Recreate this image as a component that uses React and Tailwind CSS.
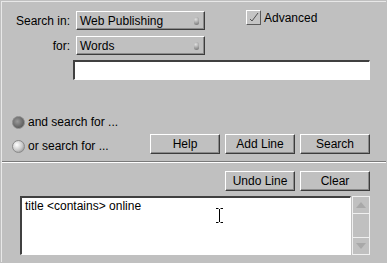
import React from "react";

/* classic motif-ish widgets */
const raised =
  "border border-t-white border-l-white border-r-[#3c3c3c] border-b-[#3c3c3c] shadow-[inset_-1px_-1px_0_#8a8a8a] bg-[#c0c0c0]";
const sunken =
  "border-t-2 border-l-2 border-r border-b border-t-[#404040] border-l-[#404040] border-r-white border-b-white bg-white";

function Dropdown({ value }) {
  return (
    <div className={`${raised} w-[129px] h-[19px] flex items-center pl-[3px] pr-[5px]`}>
      <span className="flex-1 text-[12px] leading-none text-black">{value}</span>
      <span className="w-[5px] h-[8px] rounded-full bg-[radial-gradient(circle_at_35%_30%,#e0e0e0,#6c6c6c)]" />
    </div>
  );
}

function Btn({ children }) {
  return (
    <button className={`${raised} w-[70px] h-[20px] text-[12px] leading-none text-black flex items-center justify-center`}>
      {children}
    </button>
  );
}

function Radio({ on, label }) {
  return (
    <div className="flex items-center">
      <span
        className={`w-[13px] h-[13px] rounded-full border border-[#8a8a8a] ${
          on
            ? "bg-[radial-gradient(circle_at_40%_40%,#9a9a9a,#5f5f5f_70%,#b8b8b8)]"
            : "bg-[radial-gradient(circle_at_35%_35%,#ffffff,#c8c8c8_55%,#7a7a7a)]"
        }`}
      />
      <span className="ml-[3px] text-[12px] leading-none text-black">{label}</span>
    </div>
  );
}

export default function App() {
  return (
    <div className="w-[387px] h-[263px] bg-[#c0c0c0] p-px font-['Liberation_Sans',Arial,sans-serif] overflow-hidden">
      <div className="h-full border-l border-t border-[#e8e8e8] flex flex-col">
        {/* ===== SEARCH IN ===== */}
        <div className="mt-[9px] flex items-start">
          <div className="flex items-center h-[19px]">
            <span className="w-[68px] text-right text-[12px] leading-none text-black">Search in:</span>
            <div className="ml-[6px]">
              <Dropdown value="Web Publishing" />
            </div>
          </div>
          <div className="ml-[41px] -mt-px flex items-center">
            <span className="w-[15px] h-[15px] border border-t-white border-l-white border-r-[#5a5a5a] border-b-[#5a5a5a] bg-[#c4c4c4] flex items-center justify-center">
              <svg width="11" height="11" viewBox="0 0 11 11">
                <path d="M2 7 L4 9 L10 1" fill="none" stroke="#505050" strokeWidth="1" />
              </svg>
            </span>
            <span className="ml-[3px] text-[12px] leading-none text-black">Advanced</span>
          </div>
        </div>

        {/* ===== FOR ===== */}
        <div className="mt-[6px] flex items-center h-[19px]">
          <span className="w-[68px] text-right text-[12px] leading-none text-black">for:</span>
          <div className="ml-[6px]">
            <Dropdown value="Words" />
          </div>
        </div>

        <div className="mt-[5px] ml-[71px]">
          <div className={`${sunken} w-[297px] h-[20px]`} />
        </div>

        {/* ===== RADIOS + BUTTONS ===== */}
        <div className="mt-[35px] pl-[10px] h-[14px] flex items-center">
          <Radio on label="and search for ..." />
        </div>
        <div className="mt-[5px] h-[20px] flex items-center pl-[10px] pr-[16px]">
          <div className="mt-[4px]">
            <Radio label="or search for ..." />
          </div>
          <div className="ml-auto flex gap-[5px]">
            <Btn>Help</Btn>
            <Btn>Add Line</Btn>
            <Btn>Search</Btn>
          </div>
        </div>

        <div className="mt-[7px] border-t border-b border-t-[#7a7a7a] border-b-white" />

        {/* ===== QUERY ===== */}
        <div className="mt-[8px] h-[20px] flex justify-end gap-[5px] pr-[16px]">
          <Btn>Undo Line</Btn>
          <Btn>Clear</Btn>
        </div>

        <div className="mt-[5px] ml-[18px] flex">
          <div className={`${sunken} relative w-[331px] h-[59px] pl-[3px] pt-[1px] text-[12px] leading-[14px] text-black`}>
            title &lt;contains&gt; online
            <svg className="absolute left-[194px] top-[10px]" width="7" height="15" viewBox="0 0 7 15">
              <path d="M0 0.5 H2.5 M4.5 0.5 H7 M3.5 1 V14 M0 14.5 H2.5 M4.5 14.5 H7" stroke="#000" strokeWidth="1" />
            </svg>
          </div>
          <div className="ml-px w-[18px] h-[59px] border border-[#f0f0f0] flex flex-col bg-[#c0c0c0]">
            <div className="h-[17px] border-b border-[#f0f0f0] flex items-center justify-center">
              <svg width="10" height="6" viewBox="0 0 10 6">
                <path d="M0 6 L5 0 L10 6 Z" fill="#a8a8a8" />
              </svg>
            </div>
            <div className="flex-1 border-b border-[#f0f0f0]" />
            <div className="h-[16px] flex items-center justify-center">
              <svg width="10" height="6" viewBox="0 0 10 6">
                <path d="M0 0 L10 0 L5 6 Z" fill="#a8a8a8" />
              </svg>
            </div>
          </div>
        </div>
      </div>
    </div>
  );
}
